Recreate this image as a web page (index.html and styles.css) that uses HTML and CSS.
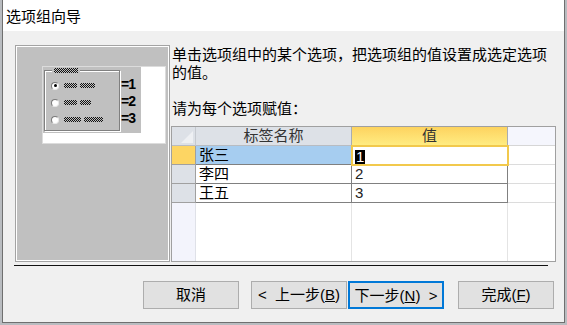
FILE: index.html
```html
<!DOCTYPE html>
<html lang="zh-CN">
<head>
  <meta charset="UTF-8">
  <link rel="stylesheet" href="styles.css">
</head>
<body>
  <div class="window">
    <div class="titlebar">选项组向导</div>

    <div class="client">
      <div class="main">
        <!-- 左侧示意图 -->
        <div class="picture">
          <div class="preview">
            <div class="preview-gray">
              <div class="groupbox">
                <span class="group-label"><span class="dots w24"></span></span>
                <div class="opt"><span class="radio checked"></span><span class="dots w13"></span><span class="dots w15"></span></div>
                <div class="opt"><span class="radio"></span><span class="dots w13"></span><span class="dots w11"></span></div>
                <div class="opt"><span class="radio"></span><span class="dots w17"></span><span class="dots w19"></span></div>
              </div>
              <div class="values">
                <span>=1</span>
                <span>=2</span>
                <span>=3</span>
              </div>
            </div>
          </div>
        </div>

        <!-- 右侧说明 + 数据表 -->
        <div class="right">
          <p class="intro">单击选项组中的某个选项，把选项组的值设置成选定选项<br>的值。</p>
          <p class="intro prompt">请为每个选项赋值：</p>

          <div class="sheet">
            <div class="corner"></div>
            <div class="head">标签名称</div>
            <div class="head active">值</div>
            <div class="head spare"></div>

            <div class="sel current"></div>
            <div class="cell picked">张三</div>
            <div class="cell focus"><span class="caret">1</span></div>
            <div class="cell spare"></div>

            <div class="sel"></div>
            <div class="cell">李四</div>
            <div class="cell num">2</div>
            <div class="cell spare"></div>

            <div class="sel"></div>
            <div class="cell">王五</div>
            <div class="cell num">3</div>
            <div class="cell spare"></div>

            <div class="sel empty"></div>
            <div class="blank"></div>
            <div class="blank"></div>
            <div class="blank last"></div>
          </div>
        </div>
      </div>

      <div class="rule"></div>

      <div class="buttons">
        <button class="btn">取消</button>
        <button class="btn back">&lt;&nbsp; 上一步(<u>B</u>)</button>
        <button class="btn next default">下一步(<u>N</u>)&nbsp; &gt;</button>
        <button class="btn finish">完成(<u>F</u>)</button>
      </div>
    </div>
  </div>
</body>
</html>
```

FILE: styles.css
```css
* {
  box-sizing: border-box;
}
html, body {
  margin: 0;
}
body {
  width: 567px;
  height: 325px;
  overflow: hidden;
  background: #b9bcc0;
  /* 拉丁字体在前: 行框高度按它计算, 中文回退到 Noto CJK */
  font-family: "Liberation Sans", "Noto Sans CJK SC", sans-serif;
  font-size: 15px;
  color: #000;
}

/* 窗口外框 */
.window {
  margin-left: 2px;
  width: 563px;
  height: 323px;
  border: 1px solid #6f6f6f;
  border-top: none;
  background: #f0f0f0;
}
.titlebar {
  height: 31px;
  background: #fff;
  padding: 2px 0 0 3px;
  line-height: 29px;
}

.main {
  display: flex;
  gap: 1px;
  padding: 14px 0 0 12px;
}

/* 左侧示意图 */
.picture {
  width: 155px;
  height: 217px;
  border: 1px solid #a3a3a3;
  box-shadow: inset 1px 1px 0 #fff, inset -1px -1px 0 #fff;
  background: #c0c0c0;
  padding: 20px 0 0 26px;
}
.preview {
  width: 124px;
  height: 78px;
  background: #fff;
  border: 1px solid #dcdcdc;
}
.preview-gray {
  display: flex;
  width: 98px;
  height: 66px;
  background: #c0c0c0;
  padding: 3px 0 0 1px;
}
.groupbox {
  position: relative;
  width: 76px;
  height: 61px;
  border: 1px solid #808080;
  box-shadow: inset 1px 1px 0 #fff, 1px 1px 0 #fff;
  padding: 6px 0 0 6px;
}
.group-label {
  position: absolute;
  top: -3px;
  left: 7px;
  padding: 0 2px;
  background: #c0c0c0;
  line-height: 0;
}
.opt {
  display: flex;
  align-items: center;
  height: 17px;
}
.radio {
  width: 8px;
  height: 8px;
  border-radius: 50%;
  background: #fff;
  border: 1px solid #7a7a7a;
  border-right-color: #e8e8e8;
  border-bottom-color: #e8e8e8;
  margin-right: 5px;
  display: flex;
  align-items: center;
  justify-content: center;
}
.radio.checked::after {
  content: "";
  width: 3px;
  height: 3px;
  border-radius: 50%;
  background: #000;
}
/* 示意用的点阵文字 */
.dots {
  display: inline-block;
  height: 5px;
  margin-right: 3px;
  background: repeating-conic-gradient(#111 0 25%, transparent 0 50%) 0 0 / 2px 2px;
}
.w11 { width: 11px; }
.w13 { width: 13px; }
.w15 { width: 15px; }
.w17 { width: 17px; }
.w19 { width: 19px; }
.w24 { width: 24px; margin-right: 0; }

.values {
  display: flex;
  flex-direction: column;
  margin-left: 1px;
  padding-top: 6px;
  font-weight: bold;
  font-size: 14px;
  line-height: 17px;
  letter-spacing: -1px;
}

/* 右侧 */
.right {
  width: 386px;
  padding-top: 1px;
}
.intro {
  margin: 0;
  padding-left: 1px;
  line-height: 18px;
  white-space: nowrap;
}
.prompt {
  margin-top: 18px;
}

/* 数据表 */
.sheet {
  display: grid;
  grid-template-columns: 24px 156px 156px 1fr;
  grid-template-rows: 19px 19px 19px 19px 1fr;
  width: 385px;
  height: 136px;
  margin-top: 8px;
  border: 1px solid #a0a0a0;
  background: #fff;
  line-height: 18px;
}
.corner {
  position: relative;
  background: #dde1e7;
  border-right: 1px solid #c5c9cf;
  border-bottom: 1px solid #b8bcc2;
}
.corner::after {
  content: "";
  position: absolute;
  right: 2px;
  bottom: 2px;
  border-left: 12px solid transparent;
  border-bottom: 12px solid #eef0f3;
}
.head {
  background: #dde1e7;
  border-right: 1px solid #a8acb2;
  border-bottom: 1px solid #b8bcc2;
  text-align: center;
  color: #333;
}
.head.active {
  background: linear-gradient(#fdd35f, #ffec82);
  border-bottom-color: #f2cf57;
}
.head.spare {
  background: #f5f6fd;
  border-right: none;
  border-bottom-color: #d6d6d6;
}
.sel {
  background: #dde1e7;
  border-right: 1px solid #a0a0a0;
  border-bottom: 1px solid #a0a0a0;
}
.sel.current {
  background: #fdd563;
}
.sel.empty {
  background: #f3f4fc;
  border-bottom: none;
  border-right-color: #dfe1e8;
}
.cell {
  padding-left: 3px;
  border-right: 1px solid #808080;
  border-bottom: 1px solid #808080;
  white-space: nowrap;
}
.cell.picked {
  background: #a6cdf0;
}
.cell.focus {
  position: relative;
  z-index: 1;
  outline: 2px solid #f2c94c;
  outline-offset: -1px;
  padding-top: 2px;
}
.cell.spare {
  border-right: none;
  border-bottom-color: #dcdcdc;
}
.num {
  color: #222;
}
.caret {
  display: inline-block;
  background: #000;
  color: #fff;
  line-height: 14px;
  padding: 0 1px;
}
.blank {
  border-right: 1px solid #e4e4e4;
}
.blank.last {
  border-right: none;
}

/* 分隔线 + 按钮 */
.rule {
  height: 1px;
  margin: 3px 16px 0 11px;
  background: #111;
}
.buttons {
  display: flex;
  padding: 15px 0 0 140px;
}
.btn {
  width: 96px;
  height: 28px;
  padding: 0;
  border: 1px solid #adadad;
  background: #e1e1e1;
  font-family: inherit;
  font-size: 15px;
  line-height: 26px;
  color: #000;
}
.btn.back { margin-left: 12px; }
.btn.next { margin-left: 1px; }
.btn.finish { margin-left: 14px; }
.btn.default {
  border: 2px solid #0078d7;
}
```
